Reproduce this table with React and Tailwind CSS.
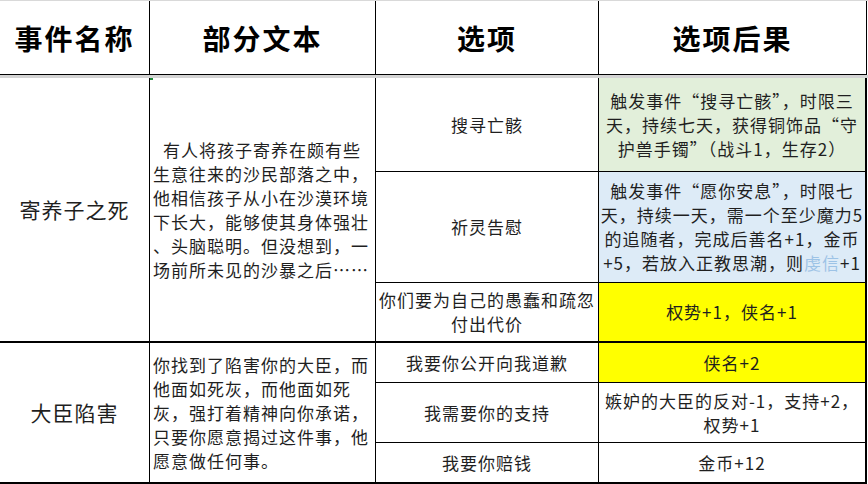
import React from "react";

const font = { fontFamily: '"Noto Sans CJK SC", "Liberation Sans", sans-serif' };

const Lines = ({ lines }) =>
  lines.map((l, i) => (
    <span key={i} className="block whitespace-nowrap">
      {l}
    </span>
  ));

const groups = [
  {
    name: "寄养子之死",
    text: [
      <span key="a" className="pl-[10px]">有人将孩子寄养在颇有些</span>,
      "生意往来的沙民部落之中，",
      "他相信孩子从小在沙漠环境",
      "下长大，能够使其身体强壮",
      "、头脑聪明。但没想到，一",
      "场前所未见的沙暴之后……",
    ],
    rows: [
      { h: "h-[94px] border-b", opt: ["搜寻亡骸"], bg: "bg-[#e2efda]", res: ["触发事件“搜寻亡骸”，时限三", "天，持续七天，获得铜饰品“守", "护兽手镯”（战斗1，生存2）"] },
      {
        h: "h-[111px] border-b",
        opt: ["祈灵告慰"],
        bg: "bg-[#ddebf7]",
        res: [
          "触发事件“愿你安息”，时限七",
          "天，持续一天，需一个至少魔力5",
          "的追随者，完成后善名+1，金币",
          <>+5，若放入正教思潮，则<span className="text-[#9dc3e6]">虔信</span>+1</>,
        ],
      },
      { h: "h-[58px]", opt: ["你们要为自己的愚蠢和疏忽", "付出代价"], bg: "bg-[#ffff00]", res: ["权势+1，侠名+1"] },
    ],
  },
  {
    name: "大臣陷害",
    text: [
      "你找到了陷害你的大臣，而",
      "他面如死灰，而他面如死",
      "灰，强打着精神向你承诺，",
      "只要你愿意揭过这件事，他",
      "愿意做任何事。",
    ],
    rows: [
      { h: "h-[40px] border-b", opt: ["我要你公开向我道歉"], bg: "bg-[#ffff00]", res: ["侠名+2"] },
      { h: "h-[60px] border-b", opt: ["我需要你的支持"], bg: "bg-white", res: ["嫉妒的大臣的反对-1，支持+2，", "权势+1"] },
      { h: "h-[39px]", opt: ["我要你赔钱"], bg: "bg-white", res: ["金币+12"] },
    ],
  },
];

export default function App() {
  return (
    <div className="w-[868px] h-[484px] bg-white text-[#1f1f1f]" style={font}>
      <div className="h-px bg-[#d9d9d9]" />
      {/* header */}
      <div className="flex h-[74px] w-[867px] border-b border-black text-[28px] font-bold tracking-[2px] text-black">
        <div className="w-[150px] border-r border-black flex items-center justify-center">事件名称</div>
        <div className="w-[226px] border-r border-black flex items-center justify-center">部分文本</div>
        <div className="w-[223px] border-r border-black flex items-center justify-center">选项</div>
        <div className="w-[268px] border-r border-black flex items-center justify-center">选项后果</div>
      </div>
      <div className="h-[3px] bg-[#d4d4d4]" />
      {/* body */}
      {groups.map((g, gi) => (
        <div key={gi} className="flex w-[867px] border-b-2 border-black">
          <div className="w-[150px] border-r border-black flex items-center justify-center text-[21px] tracking-[1px]">
            {g.name}
          </div>
          <div className="relative w-[226px] border-r border-black flex flex-col justify-center pl-[3px] text-[17px] tracking-[1px] leading-[24px]">
            {gi === 0 && <div className="absolute left-0 top-0 w-[3px] h-[2px] bg-[#1e8a3a]" />}
            <Lines lines={g.text} />
          </div>
          <div className="flex flex-col">
            {g.rows.map((r, ri) => (
              <div key={ri} className={`flex border-black ${r.h}`}>
                <div className="w-[223px] border-r border-black flex flex-col items-center justify-center text-center text-[17px] tracking-[1px] leading-[24px]">
                  <Lines lines={r.opt} />
                </div>
                <div
                  className={`w-[268px] border-r-2 border-black flex flex-col items-center justify-center text-center px-[2px] text-[17px] tracking-[1px] leading-[24px] ${r.bg}`}
                >
                  <Lines lines={r.res} />
                </div>
              </div>
            ))}
          </div>
        </div>
      ))}
    </div>
  );
}
